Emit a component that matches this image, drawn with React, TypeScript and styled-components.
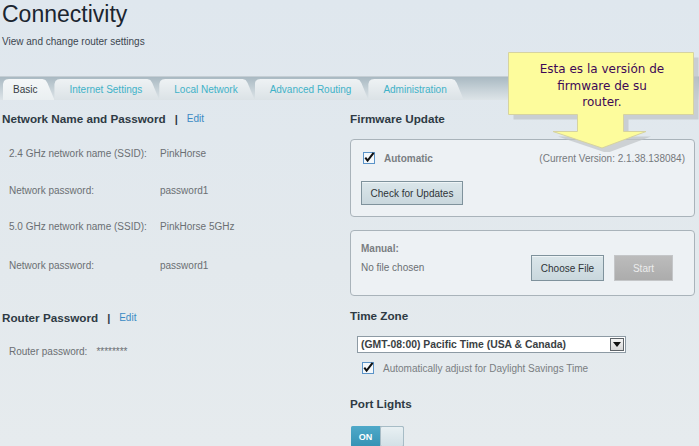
import React from "react";
import styled, { createGlobalStyle } from "styled-components";

const Global = createGlobalStyle`
  html, body { margin: 0; padding: 0; }
  body {
    width: 699px; height: 446px; overflow: hidden;
    background: linear-gradient(180deg, #dfe7ee 0%, #e3e9ed 60%, #e6ebee 100%);
    font-family: "Liberation Sans", Arial, sans-serif;
  }
`;

const Page = styled.div`
  position: relative;
  width: 699px;
  height: 446px;
  overflow: hidden;
`;

const Header = styled.header`
  padding: 0 0 0 2px;
  height: 76px;
`;

const Title = styled.h1`
  margin: 0;
  font-size: 23px;
  font-weight: normal;
  line-height: 28px;
  color: #1b2530;
`;

const Subtitle = styled.div`
  margin-top: 8px;
  font-size: 10px;
  line-height: 12px;
  color: #3c4650;
`;

const TabBar = styled.nav`
  display: flex;
  align-items: flex-end;
  height: 23px;
  padding-left: 3px;
  border-top: 1px solid #c5ced4;
  background: linear-gradient(180deg, #a9b9c2 0%, #c7d2d8 55%, #dde4e8 100%);
`;

const Tab = styled.div<{ $active?: boolean; $first?: boolean }>`
  height: 21px;
  display: flex;
  align-items: center;
  padding: 0 17px 0 ${(p) => (p.$first ? 10 : 15)}px;
  font-size: 10px;
  color: ${(p) => (p.$active ? "#333b42" : "#3fb2c8")};
  background: ${(p) =>
    p.$active
      ? "linear-gradient(180deg, #f4f7f8 0%, #eaeff1 100%)"
      : "linear-gradient(180deg, #eef2f4 0%, #dbe2e6 100%)"};
  clip-path: polygon(0 5px, 1px 2px, 3px 0.5px, 6px 0, calc(100% - 12px) 0, calc(100% - 9px) 1px, calc(100% - 7px) 4px, 100% 100%, 0 100%);
`;

const Main = styled.main`
  display: grid;
  grid-template-columns: 348px 345px;
  padding: 12px 0 0 2px;
`;

const Column = styled.section`
  display: flex;
  flex-direction: column;
  align-items: flex-start;
`;

const Heading = styled.h2<{ $mt?: number }>`
  margin: ${(p) => p.$mt ?? 0}px 0 0 0;
  font-size: 11.7px;
  line-height: 14px;
  font-weight: bold;
  color: #2e3a44;
  display: flex;
  align-items: center;
`;

const Sep = styled.span`
  margin: 0 9px 0 9px;
  font-size: 11px;
  color: #2e3a44;
`;

const EditLink = styled.a`
  font-size: 10px;
  font-weight: normal;
  color: #3a8ac4;
  text-decoration: none;
`;

const InfoRow = styled.div<{ $mt: number; $inline?: boolean }>`
  margin-top: ${(p) => p.$mt}px;
  padding-left: 7px;
  display: grid;
  grid-template-columns: ${(p) => (p.$inline ? "auto auto" : "151px auto")};
  column-gap: ${(p) => (p.$inline ? "9px" : "0")};
  font-size: 10px;
  line-height: 12px;
  color: #6b6f73;
`;

const Box = styled.div<{ $h: number; $mt: number }>`
  box-sizing: border-box;
  width: 345px;
  height: ${(p) => p.$h}px;
  margin-top: ${(p) => p.$mt}px;
  border: 1px solid #a9b3ba;
  border-radius: 4px;
  background: #edf1f4;
  padding: 11px 9px 0 10px;
`;

const AutoRow = styled.div`
  display: flex;
  align-items: center;
  padding-left: 2px;
  height: 14px;
`;

const CheckLabel = styled.span<{ $bold?: boolean }>`
  margin-left: 9px;
  font-size: 10px;
  font-weight: ${(p) => (p.$bold ? "bold" : "normal")};
  color: #7a7e82;
`;

const Version = styled.span`
  margin-left: auto;
  font-size: 10px;
  color: #75797d;
`;

const Button = styled.button<{ $w: number; $h: number; $disabled?: boolean }>`
  box-sizing: border-box;
  width: ${(p) => p.$w}px;
  height: ${(p) => p.$h}px;
  padding: 0;
  font-family: "Liberation Sans", Arial, sans-serif;
  font-size: 10px;
  color: ${(p) => (p.$disabled ? "#ececec" : "#2f3438")};
  border: 1px solid ${(p) => (p.$disabled ? "#c4c6c8" : "#7f929c")};
  background: ${(p) =>
    p.$disabled
      ? "linear-gradient(180deg, #bcbcbc 0%, #acacac 100%)"
      : "linear-gradient(180deg, #dbe6ea 0%, #c9d7dd 100%)"};
  box-shadow: ${(p) => (p.$disabled ? "none" : "inset 0 1px 0 #eef4f6")};
`;

const CheckButtonWrap = styled.div`
  margin-top: 16px;
`;

const ManualGrid = styled.div`
  display: grid;
  grid-template-columns: 1fr auto auto;
  column-gap: 10px;
  align-items: end;
  padding-right: 12px;
`;

const ManualText = styled.div`
  font-size: 10px;
  line-height: 19px;
  color: #6b6f73;
  align-self: start;
  margin-top: -3px;
`;

const ManualTitle = styled.div`
  font-weight: bold;
  color: #7a7e82;
`;

const ButtonsRow = styled.div`
  margin-top: 13px;
`;

const Select = styled.div`
  box-sizing: border-box;
  margin: 13px 0 0 7px;
  width: 269px;
  height: 17px;
  background: #fff;
  border: 1px solid #8d9aa4;
  display: flex;
  align-items: center;
  font-size: 10.4px;
  font-weight: bold;
  color: #3a3f44;
  padding-left: 3px;
`;

const SelectArrow = styled.span`
  margin-left: auto;
  box-sizing: border-box;
  width: 14px;
  height: 13px;
  margin-right: 1px;
  border: 1px solid #5d6368;
  background: linear-gradient(180deg, #f4f4f4, #d8d8d8);
  display: flex;
  align-items: center;
  justify-content: center;
`;

const DstRow = styled.div`
  margin: 9px 0 0 12px;
  display: flex;
  align-items: center;
  height: 12px;
`;

const Toggle = styled.div`
  margin: 15px 0 0 1px;
  display: flex;
  width: 53px;
  height: 21px;
  border-radius: 2px;
  overflow: hidden;
  box-shadow: 0 0 0 1px #9fb4c0 inset;
`;

const ToggleOn = styled.span`
  width: 29px;
  display: flex;
  align-items: center;
  justify-content: center;
  font-size: 9px;
  font-weight: bold;
  color: #fff;
  background: linear-gradient(180deg, #4fa9c9 0%, #3592b4 100%);
`;

const ToggleKnob = styled.span`
  flex: 1;
  box-sizing: border-box;
  border: 1px solid #a7bcc6;
  border-radius: 2px;
  background: linear-gradient(180deg, #e8f0f3 0%, #d3e0e6 100%);
`;

const Callout = styled.div`
  position: absolute;
  left: 508px;
  top: 52px;
  width: 192px;
  height: 100px;
`;

const CalloutSvg = styled.svg`
  position: absolute;
  left: 0;
  top: 0;
`;

const CalloutText = styled.div`
  position: absolute;
  left: 0;
  top: 9px;
  width: 188px;
  text-align: center;
  font-family: "DejaVu Sans", Verdana, sans-serif;
  font-size: 12px;
  line-height: 16.5px;
  color: #3d0857;
`;

const Check = () => (
  <svg width="12" height="12" viewBox="0 0 12 12">
    <rect x="0.5" y="0.5" width="11" height="11" fill="#f4f8fb" stroke="#5b93c8" />
    <path d="M2.3 5.6 L4.6 8.6 L10.6 0.8" fill="none" stroke="#111" strokeWidth="2" />
  </svg>
);

const calloutShape =
  "M0.5 0.5 H185.5 V62.5 H115.5 V79.5 H138 L94 96 L45 79.5 H69.5 V62.5 H0.5 Z";

export default function App() {
  return (
    <Page>
      <Global />
      <Header>
        <Title>Connectivity</Title>
        <Subtitle>View and change router settings</Subtitle>
      </Header>
      <TabBar>
        <Tab $active $first>Basic</Tab>
        <Tab>Internet Settings</Tab>
        <Tab>Local Network</Tab>
        <Tab>Advanced Routing</Tab>
        <Tab>Administration</Tab>
      </TabBar>
      <Main>
        <Column>
          <Heading>
            Network Name and Password<Sep>|</Sep>
            <EditLink>Edit</EditLink>
          </Heading>
          <InfoRow $mt={22}>
            <span>2.4 GHz network name (SSID):</span>
            <span>PinkHorse</span>
          </InfoRow>
          <InfoRow $mt={25}>
            <span>Network password:</span>
            <span>password1</span>
          </InfoRow>
          <InfoRow $mt={24}>
            <span>5.0 GHz network name (SSID):</span>
            <span>PinkHorse 5GHz</span>
          </InfoRow>
          <InfoRow $mt={27}>
            <span>Network password:</span>
            <span>password1</span>
          </InfoRow>
          <Heading $mt={39}>
            Router Password<Sep>|</Sep>
            <EditLink>Edit</EditLink>
          </Heading>
          <InfoRow $mt={21} $inline>
            <span>Router password:</span>
            <span>********</span>
          </InfoRow>
        </Column>
        <Column>
          <Heading>Firmware Update</Heading>
          <Box $h={78} $mt={13}>
            <AutoRow>
              <Check />
              <CheckLabel $bold>Automatic</CheckLabel>
              <Version>(Current Version: 2.1.38.138084)</Version>
            </AutoRow>
            <CheckButtonWrap>
              <Button $w={102} $h={24}>Check for Updates</Button>
            </CheckButtonWrap>
          </Box>
          <Box $h={66} $mt={13}>
            <ManualGrid>
              <ManualText>
                <ManualTitle>Manual:</ManualTitle>
                No file chosen
              </ManualText>
              <ButtonsRow>
                <Button $w={73} $h={26}>Choose File</Button>
              </ButtonsRow>
              <ButtonsRow>
                <Button $w={59} $h={26} $disabled>Start</Button>
              </ButtonsRow>
            </ManualGrid>
          </Box>
          <Heading $mt={13}>Time Zone</Heading>
          <Select>
            (GMT-08:00) Pacific Time (USA &amp; Canada)
            <SelectArrow>
              <svg width="8" height="5" viewBox="0 0 8 5">
                <path d="M0 0 H8 L4 5 Z" fill="#111" />
              </svg>
            </SelectArrow>
          </Select>
          <DstRow>
            <Check />
            <CheckLabel>Automatically adjust for Daylight Savings Time</CheckLabel>
          </DstRow>
          <Heading $mt={23}>Port Lights</Heading>
          <Toggle>
            <ToggleOn>ON</ToggleOn>
            <ToggleKnob />
          </Toggle>
        </Column>
      </Main>
      <Callout>
        <CalloutSvg width="192" height="100" viewBox="0 0 192 100">
          <path d={calloutShape} transform="translate(5 5)" fill="#bfc3c6" opacity="0.7" />
          <path d={calloutShape} fill="#fdfc9c" stroke="#d6d3a0" />
        </CalloutSvg>
        <CalloutText>
          Esta es la versión de
          <br />
          firmware de su
          <br />
          router.
        </CalloutText>
      </Callout>
    </Page>
  );
}
